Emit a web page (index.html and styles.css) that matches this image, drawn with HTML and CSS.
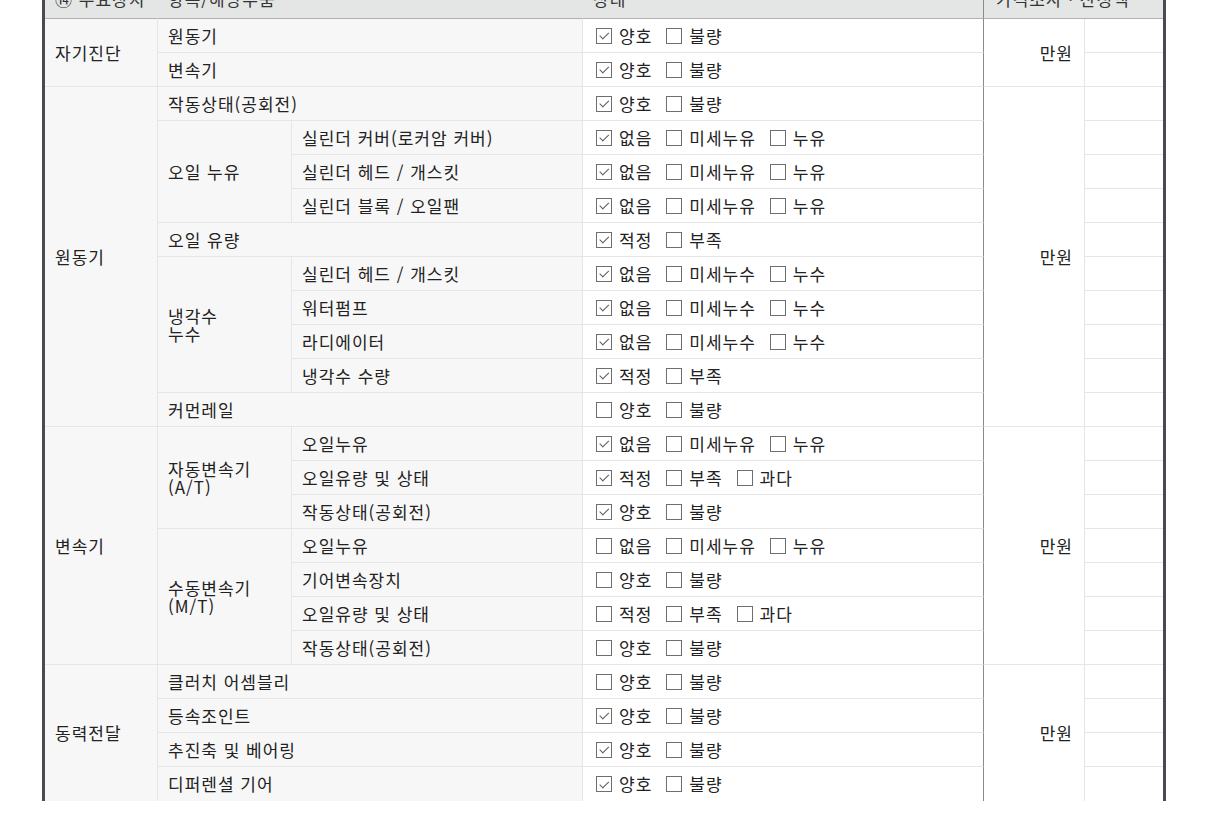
FILE: index.html
```html
<!DOCTYPE html>
<html lang="ko">
<head>
<meta charset="utf-8">
<title>주요장치</title>
<link rel="stylesheet" href="styles.css">
</head>
<body>
<div class="sheet">
  <div class="h h1">⑭ 주요장치</div>
  <div class="h h2">항목/해당부품</div>
  <div class="h h3">상태</div>
  <div class="h h4">가격조사 · 산정액</div>

  <!-- 자기진단 -->
  <div class="g r2">자기진단</div>
  <div class="ib">원동기</div>
  <div class="st"><span class="opt"><span class="cb on"></span>양호</span><span class="opt"><span class="cb"></span>불량</span></div>
  <div class="pr r2">만원</div>
  <div class="x"></div>
  <div class="ib">변속기</div>
  <div class="st"><span class="opt"><span class="cb on"></span>양호</span><span class="opt"><span class="cb"></span>불량</span></div>
  <div class="x"></div>

  <!-- 원동기 -->
  <div class="g r10">원동기</div>
  <div class="ib">작동상태(공회전)</div>
  <div class="st"><span class="opt"><span class="cb on"></span>양호</span><span class="opt"><span class="cb"></span>불량</span></div>
  <div class="pr r10">만원</div>
  <div class="x"></div>

  <div class="s r3">오일 누유</div>
  <div class="i">실린더 커버(로커암 커버)</div>
  <div class="st"><span class="opt"><span class="cb on"></span>없음</span><span class="opt"><span class="cb"></span>미세누유</span><span class="opt"><span class="cb"></span>누유</span></div>
  <div class="x"></div>
  <div class="i">실린더 헤드 / 개스킷</div>
  <div class="st"><span class="opt"><span class="cb on"></span>없음</span><span class="opt"><span class="cb"></span>미세누유</span><span class="opt"><span class="cb"></span>누유</span></div>
  <div class="x"></div>
  <div class="i">실린더 블록 / 오일팬</div>
  <div class="st"><span class="opt"><span class="cb on"></span>없음</span><span class="opt"><span class="cb"></span>미세누유</span><span class="opt"><span class="cb"></span>누유</span></div>
  <div class="x"></div>

  <div class="ib">오일 유량</div>
  <div class="st"><span class="opt"><span class="cb on"></span>적정</span><span class="opt"><span class="cb"></span>부족</span></div>
  <div class="x"></div>

  <div class="s r4">냉각수<br>누수</div>
  <div class="i">실린더 헤드 / 개스킷</div>
  <div class="st"><span class="opt"><span class="cb on"></span>없음</span><span class="opt"><span class="cb"></span>미세누수</span><span class="opt"><span class="cb"></span>누수</span></div>
  <div class="x"></div>
  <div class="i">워터펌프</div>
  <div class="st"><span class="opt"><span class="cb on"></span>없음</span><span class="opt"><span class="cb"></span>미세누수</span><span class="opt"><span class="cb"></span>누수</span></div>
  <div class="x"></div>
  <div class="i">라디에이터</div>
  <div class="st"><span class="opt"><span class="cb on"></span>없음</span><span class="opt"><span class="cb"></span>미세누수</span><span class="opt"><span class="cb"></span>누수</span></div>
  <div class="x"></div>
  <div class="i">냉각수 수량</div>
  <div class="st"><span class="opt"><span class="cb on"></span>적정</span><span class="opt"><span class="cb"></span>부족</span></div>
  <div class="x"></div>

  <div class="ib">커먼레일</div>
  <div class="st"><span class="opt"><span class="cb"></span>양호</span><span class="opt"><span class="cb"></span>불량</span></div>
  <div class="x"></div>

  <!-- 변속기 -->
  <div class="g r7">변속기</div>
  <div class="s r3">자동변속기<br>(A/T)</div>
  <div class="i">오일누유</div>
  <div class="st"><span class="opt"><span class="cb on"></span>없음</span><span class="opt"><span class="cb"></span>미세누유</span><span class="opt"><span class="cb"></span>누유</span></div>
  <div class="pr r7">만원</div>
  <div class="x"></div>
  <div class="i">오일유량 및 상태</div>
  <div class="st"><span class="opt"><span class="cb on"></span>적정</span><span class="opt"><span class="cb"></span>부족</span><span class="opt"><span class="cb"></span>과다</span></div>
  <div class="x"></div>
  <div class="i">작동상태(공회전)</div>
  <div class="st"><span class="opt"><span class="cb on"></span>양호</span><span class="opt"><span class="cb"></span>불량</span></div>
  <div class="x"></div>

  <div class="s r4">수동변속기<br>(M/T)</div>
  <div class="i">오일누유</div>
  <div class="st"><span class="opt"><span class="cb"></span>없음</span><span class="opt"><span class="cb"></span>미세누유</span><span class="opt"><span class="cb"></span>누유</span></div>
  <div class="x"></div>
  <div class="i">기어변속장치</div>
  <div class="st"><span class="opt"><span class="cb"></span>양호</span><span class="opt"><span class="cb"></span>불량</span></div>
  <div class="x"></div>
  <div class="i">오일유량 및 상태</div>
  <div class="st"><span class="opt"><span class="cb"></span>적정</span><span class="opt"><span class="cb"></span>부족</span><span class="opt"><span class="cb"></span>과다</span></div>
  <div class="x"></div>
  <div class="i">작동상태(공회전)</div>
  <div class="st"><span class="opt"><span class="cb"></span>양호</span><span class="opt"><span class="cb"></span>불량</span></div>
  <div class="x"></div>

  <!-- 동력전달 -->
  <div class="g r4 last">동력전달</div>
  <div class="ib">클러치 어셈블리</div>
  <div class="st"><span class="opt"><span class="cb"></span>양호</span><span class="opt"><span class="cb"></span>불량</span></div>
  <div class="pr r4 last">만원</div>
  <div class="x"></div>
  <div class="ib">등속조인트</div>
  <div class="st"><span class="opt"><span class="cb on"></span>양호</span><span class="opt"><span class="cb"></span>불량</span></div>
  <div class="x"></div>
  <div class="ib">추진축 및 베어링</div>
  <div class="st"><span class="opt"><span class="cb on"></span>양호</span><span class="opt"><span class="cb"></span>불량</span></div>
  <div class="x"></div>
  <div class="ib last">디퍼렌셜 기어</div>
  <div class="st last"><span class="opt"><span class="cb on"></span>양호</span><span class="opt"><span class="cb"></span>불량</span></div>
  <div class="x last"></div>
</div>
</body>
</html>
```

FILE: styles.css
```css
html, body {
  margin: 0;
  padding: 0;
  background: #ffffff;
}

body {
  font-family: "Noto Sans CJK KR", "Noto Sans", sans-serif;
  font-size: 17px;
  letter-spacing: 1px;
  color: #222222;
  height: 826px;
  overflow: hidden;
}

.sheet {
  margin: -16px 0 0 42px;
  width: 1118px;
  display: grid;
  grid-template-columns: 113px 134px 291px 401px 101px 78px;
  grid-template-rows: 35px;
  grid-auto-rows: 34px;
  border-left: 3px solid #4a4b50;
  border-right: 3px solid #4a4b50;
}

.sheet > div {
  box-sizing: border-box;
  display: flex;
  align-items: center;
  border-bottom: 1px solid #e6e6e6;
  border-right: 1px solid #e6e6e6;
  line-height: 18px;
  white-space: nowrap;
}

.sheet > div.last {
  border-bottom: none;
}

/* header */
.h {
  background: #e4e5e5;
  color: #333333;
  padding-left: 10px;
  padding-bottom: 4px;
  border-bottom-color: #b0b0b0 !important;
}
.h1 { grid-column: 1; }
.h2 { grid-column: 2 / 4; }
.h3 { grid-column: 4; border-right-color: #8a8a8a !important; }
.h4 { grid-column: 5 / 7; padding-left: 12px; border-right: none !important; }

/* label cells */
.g {
  grid-column: 1;
  background: #f7f7f7;
  padding-left: 10px;
}
.s {
  grid-column: 2;
  background: #f7f7f7;
  padding-left: 10px;
}
.i {
  grid-column: 3;
  background: #f7f7f7;
  padding-left: 10px;
}
.ib {
  grid-column: 2 / 4;
  background: #f7f7f7;
  padding-left: 10px;
}

.r2 { grid-row: span 2; }
.r3 { grid-row: span 3; }
.r4 { grid-row: span 4; }
.r7 { grid-row: span 7; }
.r10 { grid-row: span 10; }

/* status */
.st {
  grid-column: 4;
  padding-left: 13px;
  border-right-color: #8a8a8a !important;
  background: #ffffff;
}
.opt {
  display: inline-flex;
  align-items: center;
  margin-right: 14px;
}
.cb {
  position: relative;
  display: inline-block;
  box-sizing: border-box;
  width: 16px;
  height: 16px;
  border: 1px solid #6e6e6e;
  background: #ffffff;
  margin-right: 7px;
}
.cb.on::after {
  content: "";
  position: absolute;
  left: 4.5px;
  top: 1.5px;
  width: 3.5px;
  height: 7.5px;
  border-right: 1.6px solid #5c5c5c;
  border-bottom: 1.6px solid #5c5c5c;
  transform: rotate(45deg);
}

/* price */
.pr {
  grid-column: 5;
  justify-content: flex-end;
  padding-right: 11px;
  background: #ffffff;
}
.x {
  grid-column: 6;
  background: #ffffff;
  border-right: none !important;
}
```
